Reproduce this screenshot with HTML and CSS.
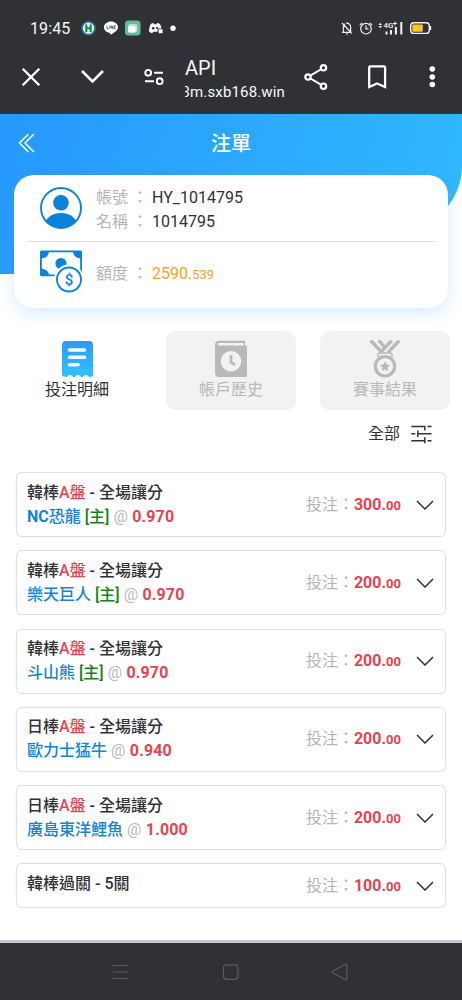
FILE: index.html
```html
<!DOCTYPE html>
<html lang="zh-Hant">
<head>
<meta charset="utf-8">
<title>注單</title>
<link rel="stylesheet" href="styles.css">
</head>
<body>
<div class="phone">
  <header class="chrome">
    <div class="status">
      <span class="clock">19:45</span>
      <svg class="notices" width="98" height="18" viewBox="0 0 98 18">
        <circle cx="8.500" cy="8.300" r="6.500" fill="#d6efe8" stroke="#3966a8" stroke-width="1.600"/>
        <path d="M6.300 4.500v7.600M10.700 4.500v7.600M6.300 8.300h4.400" stroke="#16883c" stroke-width="2"/>
        <path d="M31 1.500c-4 0-7 2.500-7 5.800 0 3 2.400 5.100 5.800 5.600.7.200.7.700.5 1.900 3-1.500 7.700-4.200 7.700-7.500 0-3.300-3-5.800-7-5.800z" fill="#fff"/>
        <path d="M27 5.700v3h1.500M29.700 5.700v3M31 8.700v-3l1.700 3v-3M35.700 5.700h-1.600v3h1.600M34.100 7.200h1.500" fill="none" stroke="#44464a" stroke-width=".8"/>
        <rect x="45" y=".5" width="15.500" height="15" rx="3.500" fill="#63bd99"/>
        <rect x="48" y="4" width="9.500" height="8.500" rx="2.500" fill="#b5e5d2"/>
        <rect x="48" y="6" width="7.500" height="6.500" rx="1.500" fill="#fff"/>
        <path d="M71 3.800l2.500-.7.800 1.200h2l.8-1.200 2.500.7c1.100 1.500 1.700 2.900 1.700 4.700h-3.800v3.200h-4.200l-1.100 1.500c-1.400-.300-2.400-.800-3.200-1.600 0-3 .6-5.500 2-7.800z" fill="#fff"/>
        <circle cx="73.200" cy="8.300" r="1.300" fill="#303135"/><circle cx="77" cy="7.800" r="1.100" fill="#303135"/>
        <rect x="78.600" y="9.200" width="4" height="4" rx=".6" fill="#fff"/>
        <circle cx="93" cy="8.300" r="2.700" fill="#fff"/>
      </svg>
      <svg class="signals" width="94" height="18" viewBox="0 0 94 18">
        <g fill="none" stroke="#f1f1f1" stroke-width="1.200">
          <path d="M3 12.300h9.500M4.300 12V7.500c0-2 .7-3.100 1.800-3.700M8 2v1.300c2.300 0 3.600 1.800 3.600 4V12M3 3l10 10.500M7 14h2"/>
          <circle cx="27" cy="8.700" r="5.300"/><path d="M27 5.400v3.500h2.500M20.800 5.200l2.400-2.400M33.200 5.200l-2.400-2.400"/>
        </g>
        <path d="M39.500 5l1.800-2.300L43.100 5zM39.500 6l1.800 2.300L43.100 6z" fill="#eee"/>
        <text x="44.500" y="7.500" class="net">4G</text>
        <path d="M54 3.500h4M56 1.500v4" stroke="#eee"/>
        <path d="M47.500 11.500v3M52 10v4.500M56.900 7v7.500M62.300 2v12.500" stroke="#f4f4f4" stroke-width="2"/>
        <rect x="71.700" y="2.800" width="18.600" height="10.600" rx="3.200" fill="none" stroke="#f4f4f4" stroke-width="1.400"/>
        <rect x="73.300" y="4.400" width="10.500" height="7.400" rx="1" fill="#fcc521"/><path d="M91.600 6v4" stroke="#f4f4f4" stroke-width="1.200"/>
      </svg>
    </div>
    <div class="toolbar">
      <svg class="tool-left" width="166" height="44" viewBox="0 0 166 44" fill="none" stroke="#fff">
        <path d="M22.700 14.700l16.600 16.600M39.300 14.700L22.700 31.300" stroke-width="2.300"/>
        <path d="M82 17l10.500 10.500L103 17" stroke-width="2.500"/>
        <circle cx="148.200" cy="18.800" r="2.900" stroke-width="1.900"/><circle cx="159.700" cy="27.200" r="2.900" stroke-width="1.900"/>
        <path d="M154 18.800h9M145 27.200h9" stroke-width="1.900"/>
      </svg>
      <div class="address"><div class="page-name">API</div><div class="host"><span>3m.sxb168.win</span></div></div>
      <svg class="tool-right" width="144" height="44" viewBox="0 0 144 44" fill="none" stroke="#fff">
        <path d="M19.500 13.800L4 23l15.500 9.200" stroke-width="2"/>
        <g fill="#303135" stroke-width="2.200"><circle cx="19.500" cy="13.800" r="2.700"/><circle cx="4" cy="23" r="2.700"/><circle cx="19.500" cy="32.200" r="2.700"/></g>
        <path d="M65.200 13.500q0-1.200 1.200-1.200h13.500q1.200 0 1.200 1.200V33l-8-3.500-7.900 3.500z" stroke-width="2.300"/>
        <g fill="#fff" stroke="none"><circle cx="128.300" cy="15" r="2.800"/><circle cx="128.300" cy="23" r="2.800"/><circle cx="128.300" cy="30.500" r="2.800"/></g>
      </svg>
    </div>
  </header>

  <main class="page">
    <section class="hero">
      <div class="titlebar">
        <svg class="back" width="18" height="20" viewBox="0 0 18 20"><path d="M10.500 1L1.500 10l9 9M16 1L7 10l9 9" fill="none" stroke="#fff" stroke-width="1.500"/></svg>
        <h1>注單</h1>
      </div>
      <div class="account">
        <div class="account-row identity">
          <svg width="42" height="42" viewBox="0 0 42 42"><defs><clipPath id="face"><circle cx="21" cy="21" r="20"/></clipPath></defs><g fill="#0b83dc" clip-path="url(#face)"><circle cx="21" cy="15.700" r="7.800"/><ellipse cx="21" cy="40" rx="17" ry="14"/></g><circle cx="21" cy="21" r="20" fill="none" stroke="#0b83dc" stroke-width="1.900"/></svg>
          <dl>
            <div><dt>帳號</dt><dd class="colon">：</dd><dd>HY_1014795</dd></div>
            <div><dt>名稱</dt><dd class="colon">：</dd><dd>1014795</dd></div>
          </dl>
        </div>
        <div class="account-row credit">
          <svg width="42" height="43" viewBox="0 0 42 43"><rect x=".9" y="1.400" width="40.200" height="24" rx="1" fill="#fff" stroke="#0b83dc" stroke-width="1.900"/><path d="M1 1.500h8q-.5 6.500-8 7zM41 1.500h-8q.5 6.500 8 7zM1 25.500h8q-.5-6.500-8-7z" fill="#0b83dc"/><circle cx="21" cy="13.500" r="5.600" fill="#0b83dc"/><circle cx="29" cy="29.500" r="15" fill="#fff"/><circle cx="29" cy="29.500" r="12" fill="#fff" stroke="#0b83dc" stroke-width="1.900"/><text x="29" y="34.700" class="coin">$</text></svg>
          <dl><div><dt>額度</dt><dd class="colon">：</dd><dd class="balance">2590.<small>539</small></dd></div></dl>
        </div>
      </div>
    </section>

    <nav class="tabs">
      <div class="tab active">
        <svg width="34" height="38" viewBox="0 0 34 38"><defs><linearGradient id="slip" x2="0" y2="1"><stop stop-color="#2a9aff"/><stop offset="1" stop-color="#30c3fb"/></linearGradient></defs><path d="M5 1h24q4 0 4 4v31q-2 1-4 1-1-2-3-2t-3 2h-2q-1-2-3-2t-3 2h-2q-1-2-3-2t-3 2q-2.500 0-5-1V5q0-4 4-4z" fill="url(#slip)"/><path d="M9.500 10h15M9.500 17.300h15M9.500 24.800h8.500" stroke="#fff" stroke-width="3.600" stroke-linecap="round"/></svg>
        <span>投注明細</span>
      </div>
      <div class="tab">
        <svg width="34" height="38" viewBox="0 0 34 38"><path d="M5 .7h26v5h2V37H4q-3-1-3-4V5Q1 .7 5 .7z" fill="#b9b9b9"/><path d="M5 4.200h23.500" stroke="#f2f2f2" stroke-width="2.500" stroke-linecap="round"/><circle cx="17" cy="21.300" r="10.300" fill="#f2f2f2"/><path d="M17 15v7l4 3" fill="none" stroke="#b9b9b9" stroke-width="2.800"/></svg>
        <span>帳戶歷史</span>
      </div>
      <div class="tab">
        <svg width="34" height="38" viewBox="0 0 34 38"><path d="M2.800.5L14 12.500M10.800.5l5.200 6M31.200.5L20 12.500M23.700.5L12.500 12.500" stroke="#b9b9b9" stroke-width="3.300"/><path d="M10 17v-2.500q0-1.500 1.500-1.500h11q1.500 0 1.500 1.500V17" fill="#f2f2f2" stroke="#b9b9b9" stroke-width="1.500"/><circle cx="17" cy="26.300" r="9.700" fill="#f2f2f2" stroke="#b9b9b9" stroke-width="3.200"/><path d="M17 21.200l1.600 3.300 3.600.5-2.600 2.500.6 3.600-3.200-1.700-3.200 1.700.6-3.600-2.600-2.500 3.600-.5z" fill="#b9b9b9"/></svg>
        <span>賽事結果</span>
      </div>
    </nav>

    <div class="filter"><span>全部</span><svg width="21" height="20" viewBox="0 0 21 20"><path d="M.3 2.500h13.500v4M16.500 2.500h4M.3 9.700h4M6.800 6.500V13M6.800 9.700h13.700M.3 16.700h13.500M13.800 13.300v6M16.500 16.700h4" fill="none" stroke="#333" stroke-width="1.500"/></svg></div>

    <section class="bets">
      <article class="bet"><div class="pick"><p>韓棒<em>A盤</em> - 全場讓分</p><p><b class="team"><span class="latin">NC</span>恐龍</b> <b class="home">[主]</b> <i>@</i> <strong>0.970</strong></p></div><div class="stake">投注：<strong>300.<small>00</small></strong></div><svg class="open" viewBox="0 0 18 10"><path d="M1 1l8 8 8-8"/></svg></article>
      <article class="bet"><div class="pick"><p>韓棒<em>A盤</em> - 全場讓分</p><p><b class="team">樂天巨人</b> <b class="home">[主]</b> <i>@</i> <strong>0.970</strong></p></div><div class="stake">投注：<strong>200.<small>00</small></strong></div><svg class="open" viewBox="0 0 18 10"><path d="M1 1l8 8 8-8"/></svg></article>
      <article class="bet"><div class="pick"><p>韓棒<em>A盤</em> - 全場讓分</p><p><b class="team">斗山熊</b> <b class="home">[主]</b> <i>@</i> <strong>0.970</strong></p></div><div class="stake">投注：<strong>200.<small>00</small></strong></div><svg class="open" viewBox="0 0 18 10"><path d="M1 1l8 8 8-8"/></svg></article>
      <article class="bet"><div class="pick"><p>日棒<em>A盤</em> - 全場讓分</p><p><b class="team">歐力士猛牛</b> <i>@</i> <strong>0.940</strong></p></div><div class="stake">投注：<strong>200.<small>00</small></strong></div><svg class="open" viewBox="0 0 18 10"><path d="M1 1l8 8 8-8"/></svg></article>
      <article class="bet"><div class="pick"><p>日棒<em>A盤</em> - 全場讓分</p><p><b class="team">廣島東洋鯉魚</b> <i>@</i> <strong>1.000</strong></p></div><div class="stake">投注：<strong>200.<small>00</small></strong></div><svg class="open" viewBox="0 0 18 10"><path d="M1 1l8 8 8-8"/></svg></article>
      <article class="bet short"><div class="pick"><p>韓棒過關 - 5關</p></div><div class="stake">投注：<strong>100.<small>00</small></strong></div><svg class="open" viewBox="0 0 18 10"><path d="M1 1l8 8 8-8"/></svg></article>
    </section>
  </main>

  <footer class="system-nav">
    <svg width="240" height="20" viewBox="0 0 240 20" fill="none" stroke="#5a5b5e" stroke-width="1.200"><path d="M3 3.500h15M3 10h15M3 16.500h15"/><rect x="113.500" y="2.800" width="14.500" height="14.500" rx="3"/><path d="M222.500 9.200l13-7q1.300-.5 1.300 1v13.500q0 1.500-1.300 1l-13-7q-1-.7 0-1.500z"/></svg>
  </footer>
</div>
</body>
</html>
```
FILE: styles.css
```css
* { box-sizing: border-box; }
body { margin: 0; background: #fff; color: #303135; font: 16px/24px Roboto, "Noto Sans CJK TC", sans-serif; }
h1, p, dl, dt, dd { margin: 0; }
svg { display: block; flex: none; }
.phone { width: 462px; height: 1000px; display: flex; flex-direction: column; overflow: hidden; }

.chrome { height: 114px; background: #303135; color: #f8f8f8; border-bottom: 1px solid #24394a; }
.status { height: 54px; padding: 20px 29px 0 30px; display: flex; }
.clock { font-size: 16px; line-height: 18px; letter-spacing: .1px; width: 50px; }
.notices { margin-right: auto; }
.net { font: 500 8px Roboto, sans-serif; fill: #f4f4f4; }
.toolbar { display: flex; height: 59px; }
.address { width: 101px; margin-left: 18px; }
.page-name { font-size: 20px; line-height: 26px; margin-top: 1px; padding-left: 1px; }
.host { display: flex; justify-content: flex-end; overflow: hidden; width: 100px; margin-left: 1px; font-size: 15px; line-height: 22px; white-space: nowrap; }
.host span { letter-spacing: .15px; }
.tool-right { margin-left: 19px; }

.page { flex: 1; display: flex; flex-direction: column; border-bottom: 3px solid #c5c8d2; overflow: hidden; }
.hero { flex: none; height: 160px; padding: 0 14px; background: linear-gradient(110deg, #2698ff, #32bafd); border-bottom-right-radius: 200px 107px; }
.titlebar { height: 61px; display: grid; grid-template-columns: 18px 1fr 18px; align-items: center; padding: 0 4px 3px; }
.titlebar h1 { text-align: center; color: #fff; font-size: 20px; line-height: 24px; font-weight: 500; padding-top: 2px; }
.account { height: 133px; padding: 0 13px; border-radius: 20px; background: #fff; box-shadow: 0 5px 18px #2c9dff33; }
.account-row { display: flex; padding-left: 13px; }
.account-row dl { margin-left: 14px; }
.account-row dl div { display: flex; }
.account-row dt, .account-row .colon { color: #b5b5b5; }
.account-row .colon { margin: 0 4px; }
.identity { height: 67px; padding-top: 12px; border-bottom: 1px solid #ddd; }
.identity dl { margin-top: -1px; }
.credit { padding-top: 8px; }
.credit dl { padding-top: 12px; }
.balance { color: #f5a21f; }
.balance small { font-size: 13px; }
.coin { font: 500 15px Roboto, sans-serif; fill: #0b83dc; text-anchor: middle; }

.tabs { display: flex; gap: 24px; margin: 57px 12px 0; height: 79px; flex: none; }
.tab { width: 130px; padding-top: 9px; display: flex; flex-direction: column; align-items: center; border-radius: 9px; background: #f2f2f2; color: #b9b9b9; line-height: 24px; }
.tab.active { background: #fff; color: #303135; }

.filter { display: flex; justify-content: flex-end; align-items: center; gap: 11px; height: 24px; margin: 12px 30px 0 0; }

.bets { display: flex; flex-direction: column; gap: 13.250px; margin: 26px 16px 0; }
.bet { height: 65px; flex: none; border: 1px solid #e0e0e0; border-radius: 6px; display: flex; align-items: center; padding: 0 11px 0 10px; box-shadow: 0 0 1px #ddd; }
.bet.short { height: 45px; }
.pick { flex: 1; align-self: flex-start; padding-top: 7.500px; font-weight: 500; white-space: nowrap; }
.pick em { font-style: normal; color: #ea4450; }
.team { color: #1583d8; font-weight: 500; }
.latin { font-weight: 700; }
.home { color: #168314; font-weight: 500; }
.pick i { color: #b9b9b9; font-style: normal; font-weight: 400; }
.pick strong, .stake strong { color: #e64350; font-weight: 700; }
.pick strong { letter-spacing: .1px; margin-left: .5px; }
.stake { color: #b5b5b5; padding-top: 1px; }
.stake small { font-size: 13px; }
.open { width: 18px; height: 10px; margin-left: 15px; fill: none; stroke: #303135; stroke-width: 1.500; }

.system-nav { height: 57px; background: #303135; display: flex; justify-content: center; padding: 19px 2px 0 0; }
```
